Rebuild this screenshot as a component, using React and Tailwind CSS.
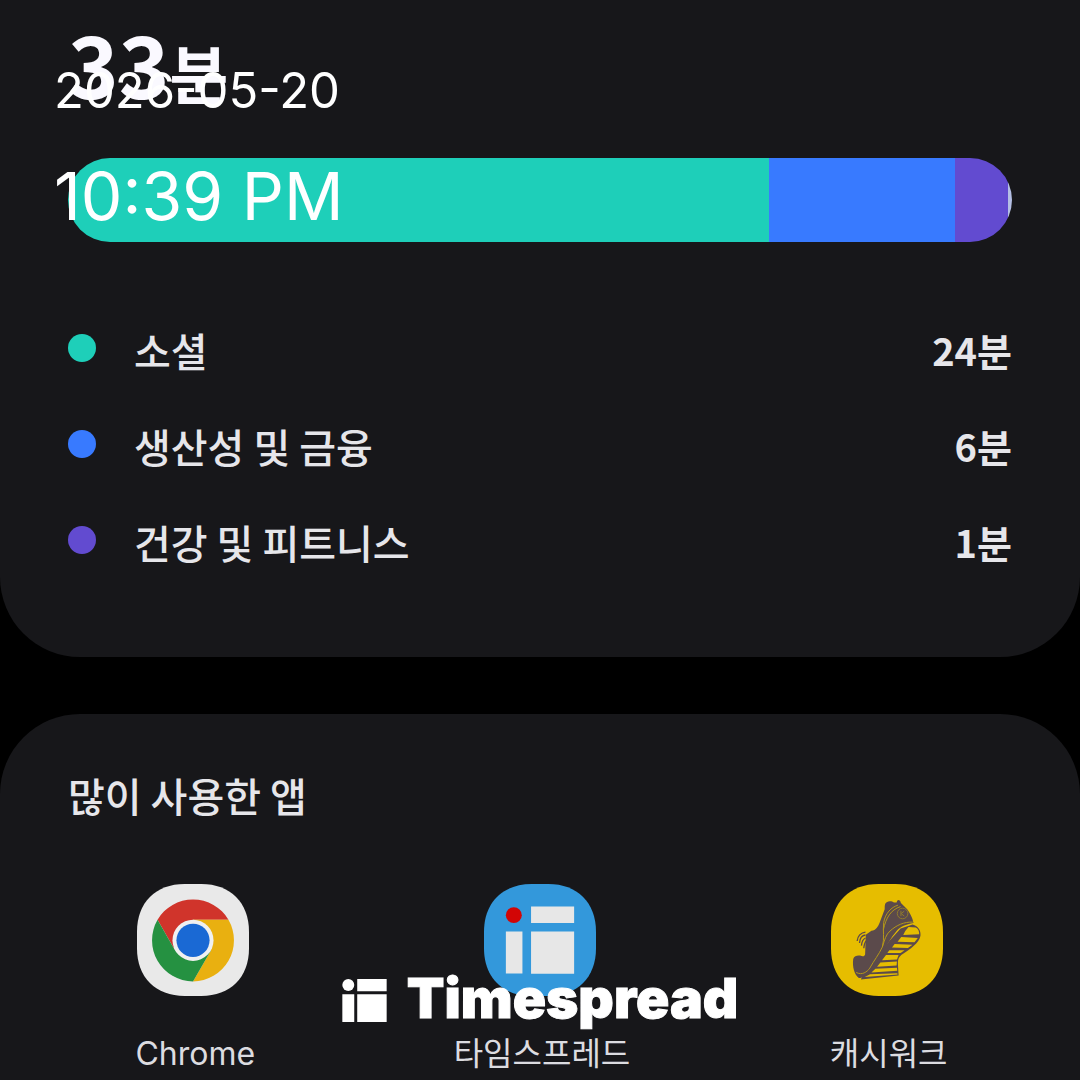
import React from "react";

const categories = [
    { name: "소셜", value: "24", color: "bg-[#1ecfb9]" },
    { name: "생산성 및 금융", value: "6", color: "bg-[#387aff]" },
    { name: "건강 및 피트니스", value: "1", color: "bg-[#624bd0]" },
];

const segments = [
    { share: 701, color: "bg-[#1ecfb9]" },
    { share: 186, color: "bg-[#387aff]" },
    { share: 53, color: "bg-[#624bd0]" },
    { share: 4, color: "bg-[#b4bfe4]" },
];

const SQUIRCLE =
    "M144 0H194C282 0 338 56 338 144V194C338 282 282 338 194 338H144C56 338 0 282 0 194V144C0 56 56 0 144 0Z";

function ChromeIcon() {
    return (
        <svg viewBox="0 0 338 338" className="size-28" aria-hidden="true">
            <path d={SQUIRCLE} fill="#e9e9e9" />
            <g transform="translate(169 170)">
                <path d="M-107 -62A124 124 0 0 1 107 -62H0L-54 31Z" fill="#d0342b" />
                <path d="M107 -62A124 124 0 0 1 0 124L54 31L0 -62Z" fill="#e9b010" />
                <path d="M-107 -62A124 124 0 0 0 0 124L54 31L-54 31Z" fill="#259141" />
                <circle r="62" fill="#f0f0f0" />
                <circle r="50" fill="#1a69d4" />
            </g>
        </svg>
    );
}

function TimespreadIcon() {
    return (
        <svg viewBox="0 0 338 338" className="size-28" aria-hidden="true">
            <path d={SQUIRCLE} fill="#3398db" />
            <circle cx="90" cy="94" r="24" fill="#d20505" />
            <path d="M142 68h130v50H142zM66 143h50v127H66zM142 143h130v128H142z" fill="#e7e7e7" />
        </svg>
    );
}

function CashwalkIcon() {
    return (
        <svg viewBox="60 42 338 338" className="size-28" aria-hidden="true">
            <path d={SQUIRCLE} transform="translate(60 42)" fill="#e6bd00" />
            {/* Sole */}
            <path
                d="M306 164C324 168 332 184 330 198C326 220 300 238 272 256C262 266 262 272 262 284L264 318L150 330L160 310L196 268L236 214L270 176Z"
                fill="#5b4a4b"
            />
            <path
                d="M294 172L316 173C324 177 327 186 326 194L278 196L284 184ZM272 202L322 205L312 218L261 216ZM252 223L306 225L292 235L244 234ZM236 242L282 242L270 250L230 250ZM226 256L264 256L259 270L214 272ZM209 279L259 276L258 288L199 292ZM194 298L259 295L260 304L182 309ZM178 314L260 311L261 315L162 323Z"
                fill="#e6bd00"
            />
            {/* Upper */}
            <path
                d="M228 97C236 92 244 94 250 98L258 98C260 88 268 88 271 99L290 118C298 130 306 142 309 160C286 164 270 170 258 184C240 204 228 230 214 250L186 290C172 316 156 326 144 326C130 314 124 292 127 268C130 258 140 257 148 258C156 262 162 260 163 254L165 195L182 183C196 182 202 170 207 158L222 118C222 108 222 100 228 97Z"
                fill="#5b4a4b"
            />
            <path
                d="M262 106C242 112 224 130 219 158C216 184 222 206 215 232M307 157C280 156 258 166 238 184C226 194 222 210 215 232C204 256 190 272 177 296C168 308 154 318 136 309M218 180C226 144 240 120 270 110"
                fill="none"
                stroke="#b49718"
                strokeWidth="3"
            />
            <g fill="none" stroke="#8f7a2c" strokeWidth="3">
                <circle cx="276" cy="131" r="16" />
                <path d="M271 123v16M281 124l-9 7 9 8" />
            </g>
            <path
                d="M164 187C150 188 140 200 139 214M164 196C154 197 147 206 146 220M164 205C157 208 153 216 152 228M166 214C161 219 160 226 159 236"
                fill="none"
                stroke="#5b4a4b"
                strokeWidth="4"
            />
        </svg>
    );
}

const apps = [
    { name: "Chrome", Icon: ChromeIcon },
    { name: "타임스프레드", Icon: TimespreadIcon },
    { name: "캐시워크", Icon: CashwalkIcon },
];

export default function App() {
    return (
        <div className="relative flex min-h-screen flex-col gap-[57px] overflow-hidden bg-black font-['Noto_Sans_CJK_KR',sans-serif] text-[#e6e6ea]">
            {/* Usage summary */}
            <section className="rounded-b-[80px] bg-[#17171a] px-[68px] pt-[18px] pb-[69px]">
                <h1 className="flex items-baseline font-bold leading-[88px] text-[#faf9ff]">
                    <span className="text-[86px]">33</span>
                    <span className="text-[64px]">분</span>
                </h1>

                <div className="mt-[43px] flex h-[84px] overflow-hidden rounded-full">
                    {segments.map((segment) => (
                        <div key={segment.color} className={segment.color} style={{ flexGrow: segment.share }}></div>
                    ))}
                </div>

                <ul className="mt-[58px]">
                    {categories.map((category) => (
                        <li key={category.name} className="flex h-24 items-center">
                            <span className={`size-7 rounded-full ${category.color}`}></span>
                            <span className="ml-[38px] pt-1 text-[40px] leading-[60px] font-medium">{category.name}</span>
                            <span className="ml-auto pt-1 text-[38px] leading-[60px] font-bold">{category.value}분</span>
                        </li>
                    ))}
                </ul>
            </section>

            {/* Most used apps */}
            <section className="flex-1 rounded-t-[80px] bg-[#17171a] px-5 pt-[51px]">
                <h2 className="px-12 text-[40px] leading-[60px] font-medium">많이 사용한 앱</h2>
                <ul className="mt-[59px] grid grid-cols-3">
                    {apps.map(({ name, Icon }) => (
                        <li key={name} className="flex flex-col items-center gap-[34px]">
                            <Icon />
                            <span className="pl-1 font-['Inter','Noto_Sans_CJK_KR',sans-serif] text-[32px] leading-[48px] text-[#dcdce0]">
                                {name}
                            </span>
                        </li>
                    ))}
                </ul>
            </section>

            {/* Date and time stamp */}
            <div className="absolute top-[60px] left-[54px] flex flex-col gap-9 font-['Inter',sans-serif] text-white">
                <time className="text-[49px] leading-[62px]">2026-05-20</time>
                <time className="text-[66px] leading-[76px]">10:39 PM</time>
            </div>

            {/* Brand mark */}
            <div className="absolute inset-x-0 top-[966px] flex items-center justify-center gap-5 text-white">
                <svg viewBox="0 0 134 130" className="h-[43px] w-[45px]" fill="currentColor" aria-hidden="true">
                    <circle cx="18" cy="18" r="18" />
                    <path d="M45 0h89v37H45zM0 46h36v84H0zM45 46h89v84H45z" />
                </svg>
                <span className="pb-1 font-['Inter',sans-serif] text-[55px] leading-[64px] font-black [-webkit-text-stroke:1px_white]">
                    Timespread
                </span>
            </div>
        </div>
    );
}
